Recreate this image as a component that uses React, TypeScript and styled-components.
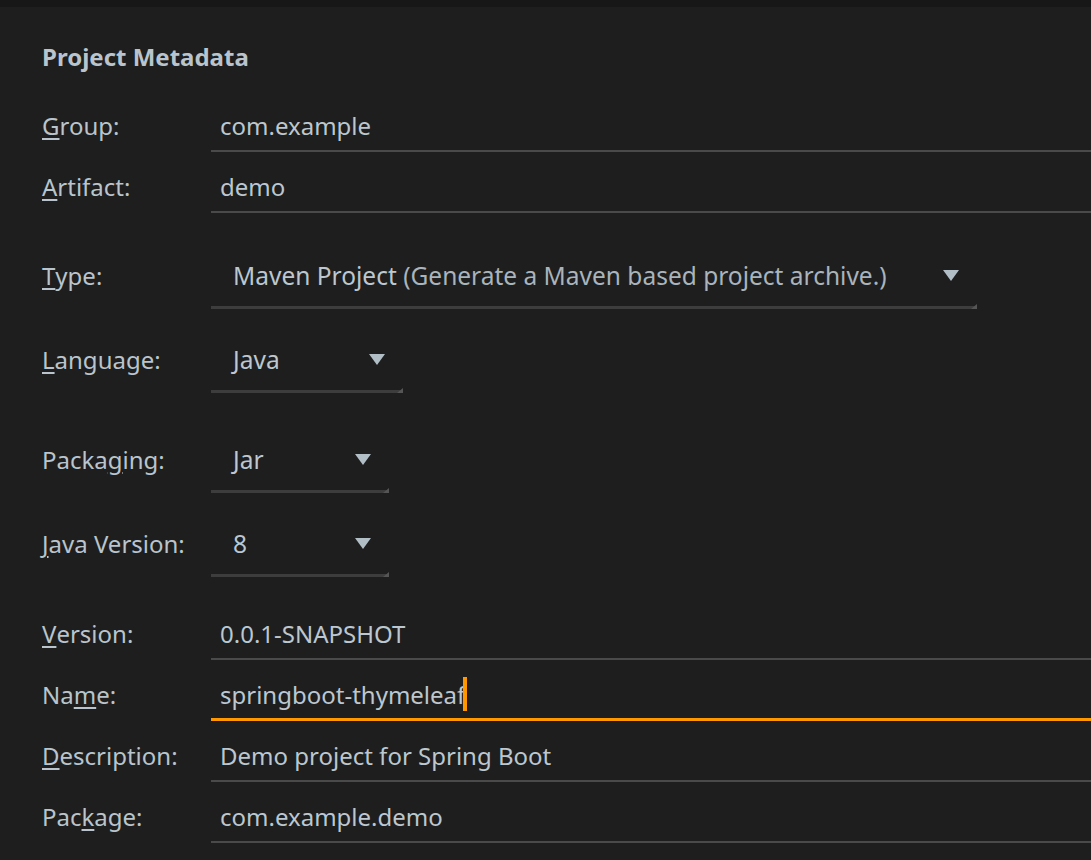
import React from "react";
import styled, { createGlobalStyle } from "styled-components";

const GlobalStyle = createGlobalStyle`
  html, body {
    margin: 0;
    padding: 0;
    background: #1e1e1e;
  }
  body {
    font-family: "Noto Sans", "Open Sans", sans-serif;
    color: #b9c4cc;
  }
`;

const Page = styled.div`
  width: 1091px;
  height: 860px;
  background: #1e1e1e;
  overflow: hidden;
`;

const TopBand = styled.div`
  height: 7px;
  background: #171717;
`;

const Form = styled.div`
  padding-left: 42px;
  display: flex;
  flex-direction: column;
`;

const Heading = styled.h2`
  margin: 0;
  height: 84px;
  display: flex;
  align-items: center;
  padding-top: 14px;
  box-sizing: border-box;
  font-size: 24px;
  font-weight: 700;
  color: #b9c4cc;
`;

const Row = styled.div<{ $gap?: number }>`
  display: grid;
  grid-template-columns: 169px 1fr;
  margin-top: ${(p) => p.$gap ?? 0}px;
  height: 61px;
`;

const Label = styled.label<{ $combo?: boolean }>`
  display: flex;
  align-items: center;
  padding-top: ${(p) => (p.$combo ? 0 : 10)}px;
  padding-bottom: ${(p) => (p.$combo ? 6 : 3)}px;
  font-size: 24px;
  color: #b9c4cc;
  white-space: nowrap;

  u {
    text-decoration: underline;
    text-underline-offset: 3px;
    text-decoration-thickness: 2px;
  }
`;

const TextField = styled.div<{ $focused?: boolean }>`
  display: flex;
  align-items: center;
  padding: 10px 0 0 9px;
  box-sizing: border-box;
  border-bottom: ${(p) => (p.$focused ? "3px solid #ff9800" : "2px solid #4a4a4a")};
  font-size: 24px;
  color: #bcc7cf;
  white-space: nowrap;
`;

const Caret = styled.span`
  display: inline-block;
  width: 4px;
  height: 34px;
  margin-left: -2px;
  background: #ff9800;
`;

const Combo = styled.div<{ $width: number }>`
  position: relative;
  width: ${(p) => p.$width}px;
  display: flex;
  align-items: center;
  justify-content: space-between;
  padding: 0 18px 4px 22px;
  box-sizing: border-box;
  border-bottom: 3px solid #3d3d3d;

  &::after {
    content: "";
    position: absolute;
    right: 0;
    bottom: -3px;
    width: 6px;
    height: 5px;
    background: #555555;
    clip-path: polygon(100% 0, 100% 100%, 0 100%);
  }
`;

const ComboText = styled.span`
  font-size: 24.5px;
  color: #bcc7cf;
  white-space: nowrap;
`;

const Hint = styled.span`
  color: #a9b4bc;
`;

const Arrow = styled.svg`
  width: 16px;
  height: 11px;
  flex-shrink: 0;
`;

const DropArrow = () => (
  <Arrow viewBox="0 0 16 11">
    <polygon points="0,0 16,0 8,11" fill="#b2bec6" />
  </Arrow>
);

type Mn = { pre?: string; k: string; post: string; combo?: boolean };

const L = ({ pre = "", k, post, combo }: Mn) => (
  <Label $combo={combo}>
    {pre}
    <u>{k}</u>
    {post}
  </Label>
);

export default function App() {
  return (
    <Page>
      <GlobalStyle />
      <TopBand />
      <Form>
        <Heading>Project Metadata</Heading>

        <Row>
          <L k="G" post="roup:" />
          <TextField>com.example</TextField>
        </Row>
        <Row>
          <L k="A" post="rtifact:" />
          <TextField>demo</TextField>
        </Row>

        <Row $gap={35}>
          <L k="T" post="ype:" combo />
          <Combo $width={766}>
            <ComboText>
              Maven Project <Hint>(Generate a Maven based project archive.)</Hint>
            </ComboText>
            <DropArrow />
          </Combo>
        </Row>
        <Row $gap={23}>
          <L k="L" post="anguage:" combo />
          <Combo $width={192}>
            <ComboText>Java</ComboText>
            <DropArrow />
          </Combo>
        </Row>
        <Row $gap={39}>
          <L pre="Packa" k="g" post="ing:" combo />
          <Combo $width={178}>
            <ComboText>Jar</ComboText>
            <DropArrow />
          </Combo>
        </Row>
        <Row $gap={23}>
          <L k="J" post="ava Version:" combo />
          <Combo $width={178}>
            <ComboText>8</ComboText>
            <DropArrow />
          </Combo>
        </Row>

        <Row $gap={22}>
          <L k="V" post="ersion:" />
          <TextField>0.0.1-SNAPSHOT</TextField>
        </Row>
        <Row>
          <L pre="Na" k="m" post="e:" />
          <TextField $focused>
            springboot-thymeleaf
            <Caret />
          </TextField>
        </Row>
        <Row>
          <L k="D" post="escription:" />
          <TextField>Demo project for Spring Boot</TextField>
        </Row>
        <Row>
          <L pre="Pac" k="k" post="age:" />
          <TextField>com.example.demo</TextField>
        </Row>
      </Form>
    </Page>
  );
}
